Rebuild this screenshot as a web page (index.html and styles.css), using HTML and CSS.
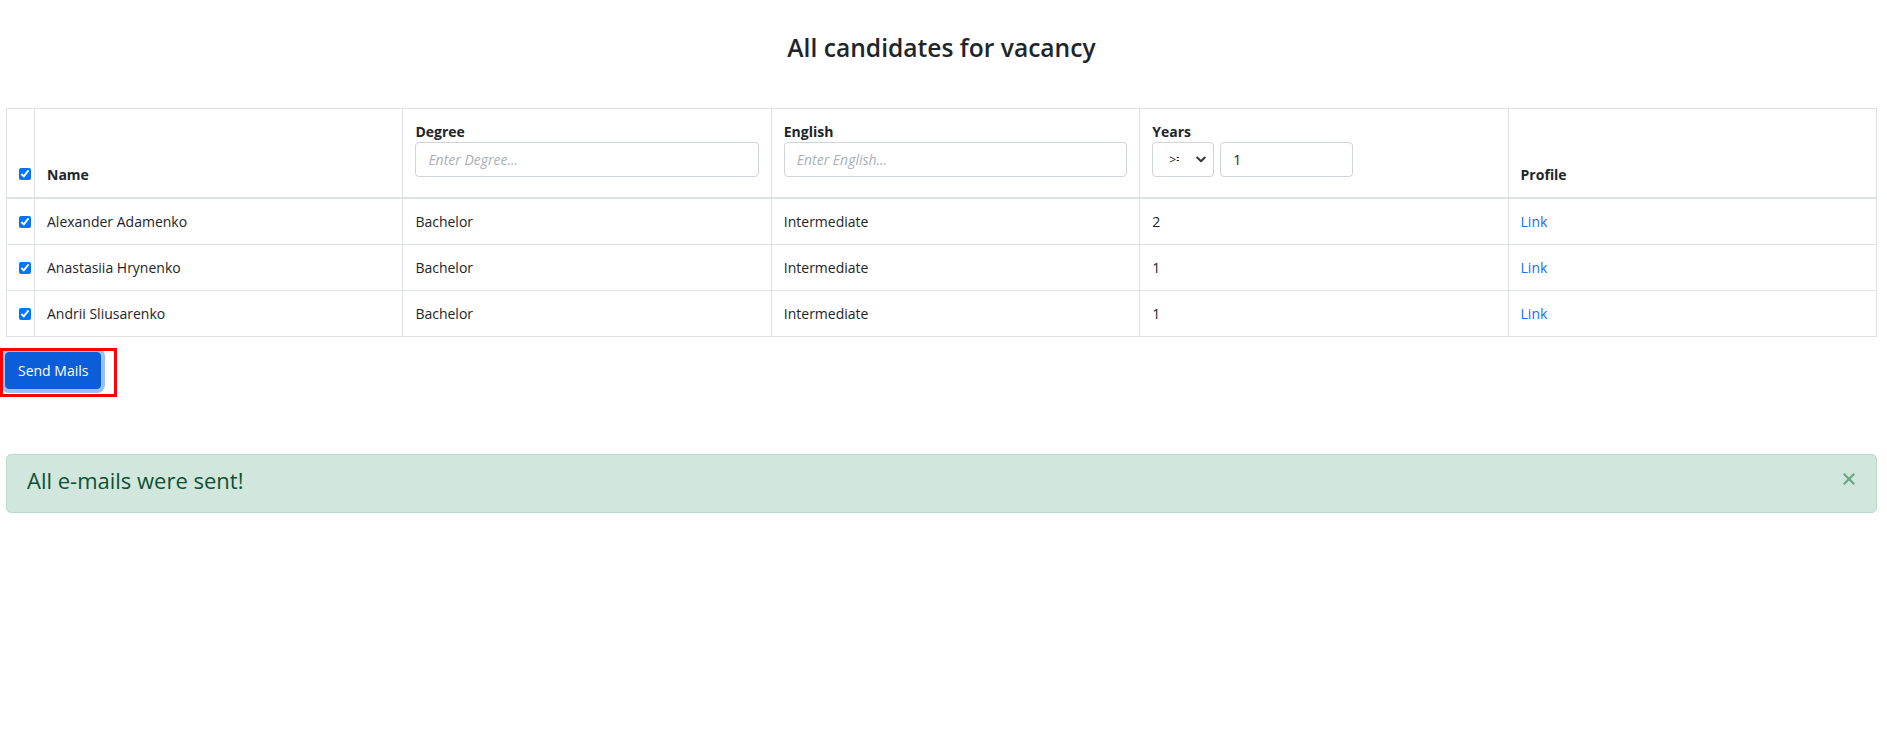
FILE: index.html
```html
<!DOCTYPE html>
<html lang="en">
<head>
<meta charset="utf-8">
<title>All candidates for vacancy</title>
<link rel="stylesheet" href="styles.css">
</head>
<body>
<main class="page">
  <h3 class="title">All candidates for vacancy</h3>
  <table class="candidates">
    <colgroup>
      <col class="col-check">
      <col><col><col><col><col>
    </colgroup>
    <thead>
      <tr>
        <th class="cell-check"><input type="checkbox" class="check" checked></th>
        <th>Name</th>
        <th>
          <label class="filter-label">Degree</label>
          <input type="text" class="form-control" placeholder="Enter Degree...">
        </th>
        <th>
          <label class="filter-label">English</label>
          <input type="text" class="form-control" placeholder="Enter English...">
        </th>
        <th>
          <label class="filter-label">Years</label>
          <div class="years-filter">
            <select class="form-select"><option>&gt;=</option><option>&lt;=</option><option>=</option></select>
            <input type="text" class="form-control years-input" value="1">
          </div>
        </th>
        <th>Profile</th>
      </tr>
    </thead>
    <tbody>
      <tr>
        <td class="cell-check"><input type="checkbox" class="check" checked></td>
        <td>Alexander Adamenko</td>
        <td>Bachelor</td>
        <td>Intermediate</td>
        <td>2</td>
        <td><a href="#" class="link">Link</a></td>
      </tr>
      <tr>
        <td class="cell-check"><input type="checkbox" class="check" checked></td>
        <td>Anastasiia Hrynenko</td>
        <td>Bachelor</td>
        <td>Intermediate</td>
        <td>1</td>
        <td><a href="#" class="link">Link</a></td>
      </tr>
      <tr>
        <td class="cell-check"><input type="checkbox" class="check" checked></td>
        <td>Andrii Sliusarenko</td>
        <td>Bachelor</td>
        <td>Intermediate</td>
        <td>1</td>
        <td><a href="#" class="link">Link</a></td>
      </tr>
    </tbody>
  </table>
  <div class="actions">
    <button type="button" class="btn-send">Send Mails</button>
  </div>
  <div class="alert">
    <span class="alert-text">All e-mails were sent!</span>
    <button type="button" class="alert-close" aria-label="Close">
      <svg width="12" height="12" viewBox="0 0 12 12"><path d="M1.5 1.5 L10.5 10.5 M10.5 1.5 L1.5 10.5" stroke="currentColor" stroke-width="2.2" stroke-linecap="square" fill="none"/></svg>
    </button>
  </div>
</main>
</body>
</html>
```

FILE: styles.css
```css
*, *::before, *::after { box-sizing: border-box; }

html, body {
  margin: 0;
  padding: 0;
  background: #ffffff;
}

body {
  font-family: "Open Sans", "Noto Sans", "Liberation Sans", sans-serif;
  font-size: 14px;
  line-height: 21px;
  color: #212529;
}

.page {
  padding: 0 10px 0 6px;
}

.title {
  margin: 33px 0 45px;
  font-size: 24.6px;
  line-height: 1.2;
  font-weight: 600;
  text-align: center;
  color: #212529;
}

.candidates {
  width: 100%;
  border-collapse: collapse;
  table-layout: fixed;
}

.col-check { width: 28px; }

.candidates th,
.candidates td {
  border: 1px solid #dee2e6;
  padding: 12px;
  text-align: left;
}

.candidates th {
  font-weight: 700;
  vertical-align: bottom;
  border-bottom: 2px solid #dee2e6;
}

.candidates td {
  vertical-align: middle;
  height: 46px;
}

.candidates .cell-check {
  padding: 12px 0 12px 7px;
}

.check {
  width: 12px;
  height: 12px;
  margin: 3px 3px 3px 5px;
  accent-color: #0075ff;
}

.candidates td .check {
  vertical-align: middle;
  margin-top: 0;
  margin-bottom: 2px;
}

.filter-label {
  display: block;
  line-height: 21px;
}

.form-control {
  display: block;
  width: 100%;
  height: 35px;
  margin: 0 0 8px;
  padding: 0 12px;
  border: 1px solid #ced4da;
  border-radius: 4px;
  font-family: inherit;
  font-size: 14px;
  font-weight: 400;
  color: #212529;
  background: #fff;
}

.form-control::placeholder {
  color: #aab0b6;
  font-style: italic;
}

.years-filter {
  display: flex;
  gap: 6px;
  margin: 0 0 8px;
}

.years-filter .form-control {
  margin: 0;
}

.form-select {
  appearance: none;
  -webkit-appearance: none;
  width: 62px;
  height: 35px;
  padding: 0 34px 0 16px;
  border: 1px solid #ced4da;
  border-radius: 4px;
  font-family: inherit;
  font-size: 12px;
  font-weight: 400;
  color: #212529;
  overflow: hidden;
  background: #fff url("data:image/svg+xml,%3csvg xmlns='http://www.w3.org/2000/svg' viewBox='0 0 10 7'%3e%3cpath fill='none' stroke='%23343a40' stroke-width='2' stroke-linecap='round' stroke-linejoin='round' d='M1.2 1.5l3.8 3.8 3.8-3.8'/%3e%3c/svg%3e") no-repeat right 7px center / 10px 7px;
}

.years-input {
  width: 133px;
}

.link {
  color: #0d6efd;
  text-decoration: none;
}

.actions {
  position: relative;
  margin-top: 15px;
  display: flex;
}

.actions::after {
  content: "";
  position: absolute;
  left: -6px;
  top: -4px;
  width: 117px;
  height: 49px;
  border: 3px solid #ff0000;
  pointer-events: none;
}

.btn-send {
  margin-left: -1px;
  height: 37px;
  padding: 0 12px;
  border: 1px solid #0b5ed7;
  border-radius: 4px;
  background: #0b5ed7;
  color: #fff;
  font-family: inherit;
  font-size: 14px;
  line-height: 21px;
  box-shadow: 0 0 0 4px rgba(49, 132, 253, 0.5);
}

.alert {
  margin-top: 65px;
  display: flex;
  align-items: center;
  justify-content: space-between;
  padding: 9px 20px 15px 20px;
  border: 1px solid #badbcc;
  border-radius: 5px;
  background: #d1e7dd;
  color: #0f5132;
}

.alert-text {
  font-size: 22px;
  line-height: 33px;
}

.alert-close {
  display: flex;
  padding: 0;
  margin: 0 1px 2px 0;
  border: 0;
  background: transparent;
  color: #6da587;
}
```
